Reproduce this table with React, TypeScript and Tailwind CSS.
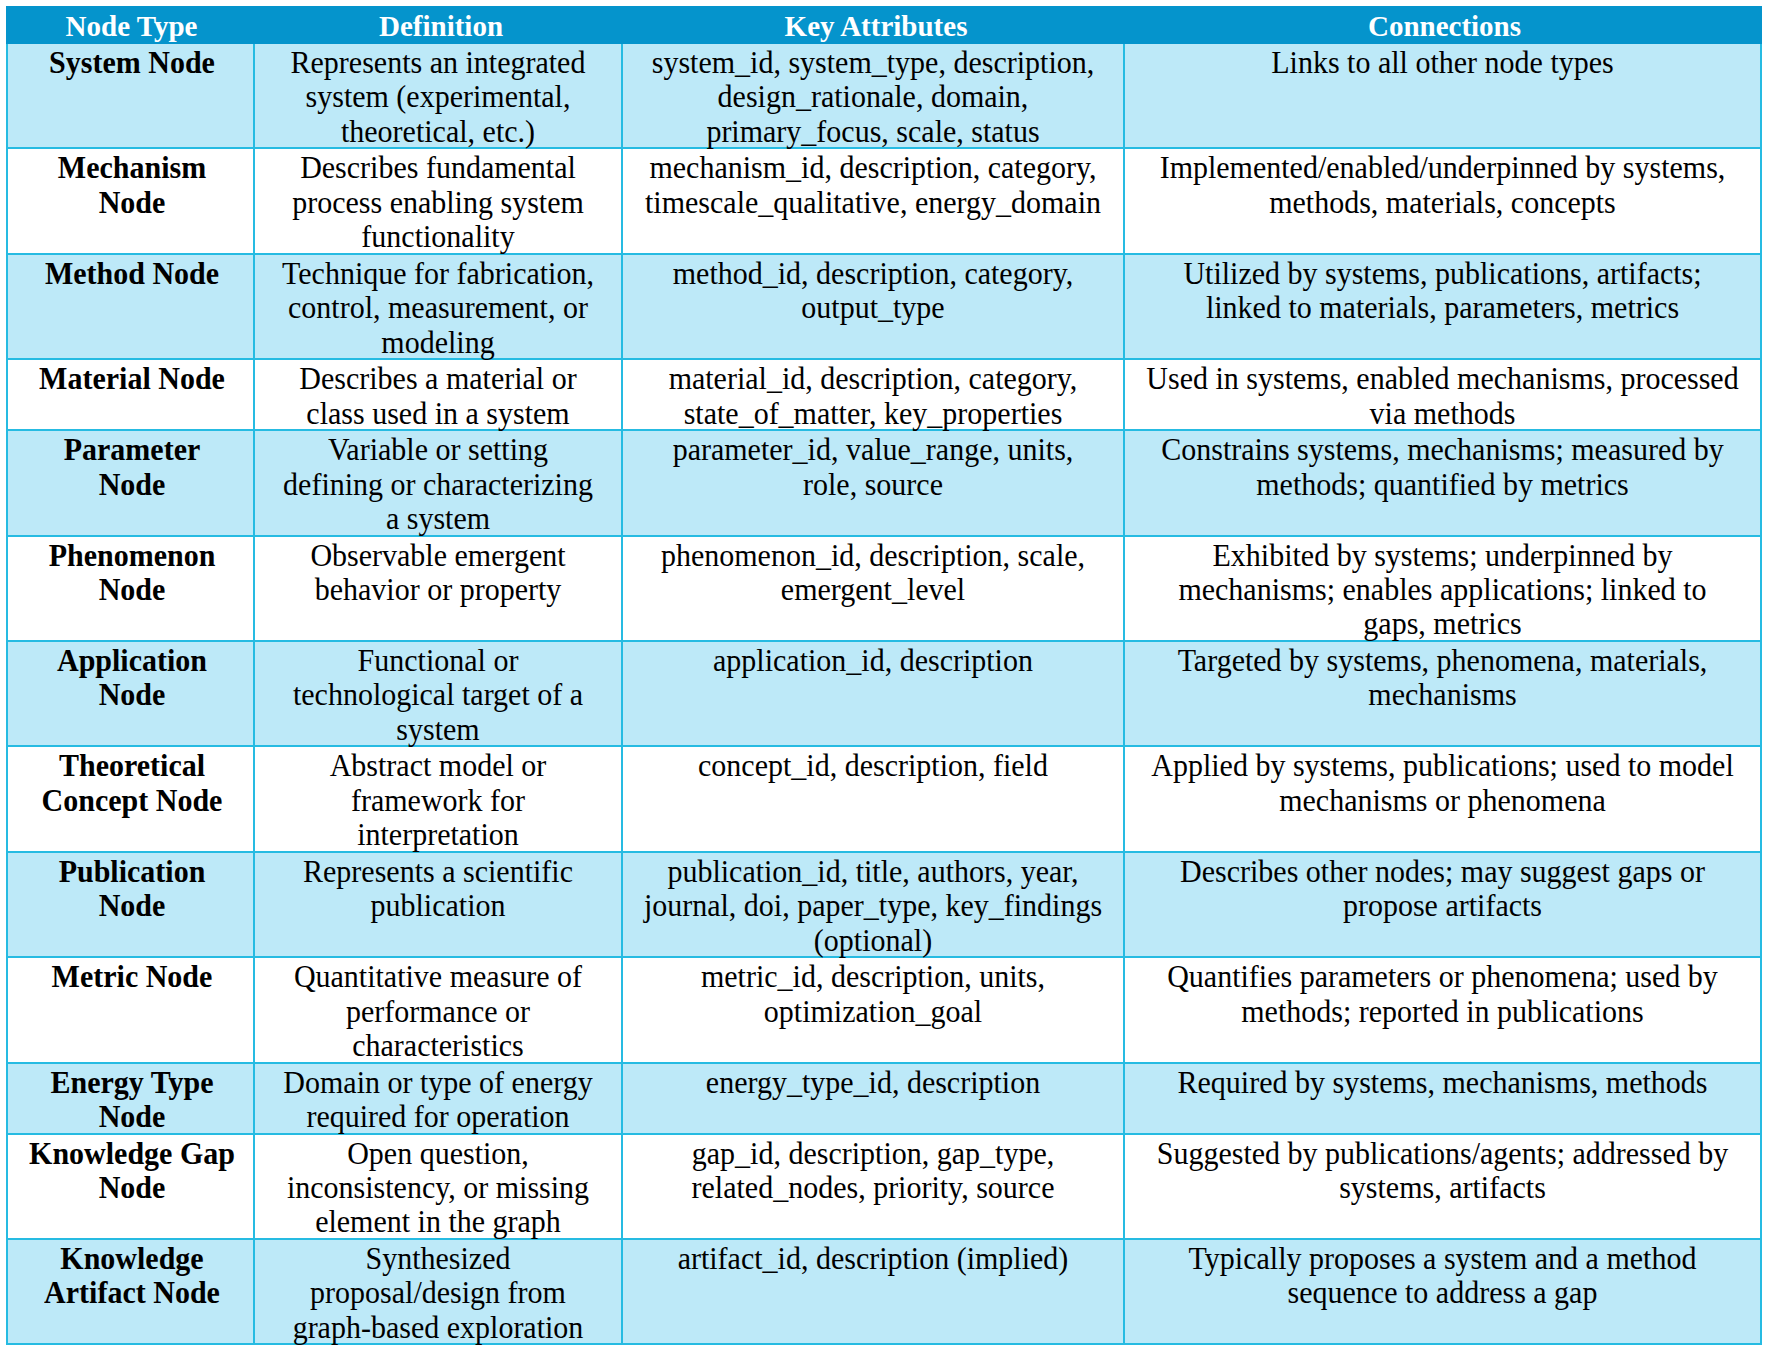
import React from "react";

type Row = {
  type: string[];
  definition: string[];
  attributes: string[];
  connections: string[];
  short?: boolean;
};

const rows: Row[] = [
  {
    type: ["System Node"],
    definition: ["Represents an integrated", "system (experimental,", "theoretical, etc.)"],
    attributes: ["system_id, system_type, description,", "design_rationale, domain,", "primary_focus, scale, status"],
    connections: ["Links to all other node types"],
  },
  {
    type: ["Mechanism", "Node"],
    definition: ["Describes fundamental", "process enabling system", "functionality"],
    attributes: ["mechanism_id, description, category,", "timescale_qualitative, energy_domain"],
    connections: ["Implemented/enabled/underpinned by systems,", "methods, materials, concepts"],
  },
  {
    type: ["Method Node"],
    definition: ["Technique for fabrication,", "control, measurement, or", "modeling"],
    attributes: ["method_id, description, category,", "output_type"],
    connections: ["Utilized by systems, publications, artifacts;", "linked to materials, parameters, metrics"],
  },
  {
    type: ["Material Node"],
    definition: ["Describes a material or", "class used in a system"],
    attributes: ["material_id, description, category,", "state_of_matter, key_properties"],
    connections: ["Used in systems, enabled mechanisms, processed", "via methods"],
    short: true,
  },
  {
    type: ["Parameter", "Node"],
    definition: ["Variable or setting", "defining or characterizing", "a system"],
    attributes: ["parameter_id, value_range, units,", "role, source"],
    connections: ["Constrains systems, mechanisms; measured by", "methods; quantified by metrics"],
  },
  {
    type: ["Phenomenon", "Node"],
    definition: ["Observable emergent", "behavior or property"],
    attributes: ["phenomenon_id, description, scale,", "emergent_level"],
    connections: ["Exhibited by systems; underpinned by", "mechanisms; enables applications; linked to", "gaps, metrics"],
  },
  {
    type: ["Application", "Node"],
    definition: ["Functional or", "technological target of a", "system"],
    attributes: ["application_id, description"],
    connections: ["Targeted by systems, phenomena, materials,", "mechanisms"],
  },
  {
    type: ["Theoretical", "Concept Node"],
    definition: ["Abstract model or", "framework for", "interpretation"],
    attributes: ["concept_id, description, field"],
    connections: ["Applied by systems, publications; used to model", "mechanisms or phenomena"],
  },
  {
    type: ["Publication", "Node"],
    definition: ["Represents a scientific", "publication"],
    attributes: ["publication_id, title, authors, year,", "journal, doi, paper_type, key_findings", "(optional)"],
    connections: ["Describes other nodes; may suggest gaps or", "propose artifacts"],
  },
  {
    type: ["Metric Node"],
    definition: ["Quantitative measure of", "performance or", "characteristics"],
    attributes: ["metric_id, description, units,", "optimization_goal"],
    connections: ["Quantifies parameters or phenomena; used by", "methods; reported in publications"],
  },
  {
    type: ["Energy Type", "Node"],
    definition: ["Domain or type of energy", "required for operation"],
    attributes: ["energy_type_id, description"],
    connections: ["Required by systems, mechanisms, methods"],
    short: true,
  },
  {
    type: ["Knowledge Gap", "Node"],
    definition: ["Open question,", "inconsistency, or missing", "element in the graph"],
    attributes: ["gap_id, description, gap_type,", "related_nodes, priority, source"],
    connections: ["Suggested by publications/agents; addressed by", "systems, artifacts"],
  },
  {
    type: ["Knowledge", "Artifact Node"],
    definition: ["Synthesized", "proposal/design from", "graph-based exploration"],
    attributes: ["artifact_id, description (implied)"],
    connections: ["Typically proposes a system and a method", "sequence to address a gap"],
  },
];

function Lines({ lines }: { lines: string[] }) {
  return (
    <>
      {lines.map((line, i) => (
        <div key={i} className="origin-top scale-y-[1.07] whitespace-nowrap">
          {line}
        </div>
      ))}
    </>
  );
}

export default function App() {
  return (
    <div
      className="min-h-[1356px] w-[1768px] bg-white pt-[6px] pl-[6px] text-black"
      style={{ fontFamily: '"Liberation Serif", "Times New Roman", serif' }}
    >
      <div className="w-[1756px]">
        {/* Header */}
        <div className="flex h-[38px] bg-[#0594cc] pt-[1px] text-[29px] font-bold leading-[38px] text-white">
          <div className="w-[251px] text-center">Node Type</div>
          <div className="w-[368px] text-center">Definition</div>
          <div className="w-[502px] text-center">Key Attributes</div>
          <div className="flex-1 text-center">Connections</div>
        </div>

        {/* Body */}
        {rows.map((row, i) => (
          <div
            key={i}
            className={`flex border-x-2 border-b-2 border-[#26bbe2] text-[30px] leading-[34.4px] ${
              row.short ? "h-[71px]" : "h-[105.4px]"
            } ${i % 2 === 0 ? "bg-[#bde9f8]" : "bg-white"}`}
          >
            <div className="w-[247px] shrink-0 border-r-2 border-[#26bbe2] pl-[3px] text-center font-bold">
              <Lines lines={row.type} />
            </div>
            <div className="w-[368px] shrink-0 border-r-2 border-[#26bbe2] text-center">
              <Lines lines={row.definition} />
            </div>
            <div className="w-[502px] shrink-0 border-r-2 border-[#26bbe2] text-center">
              <Lines lines={row.attributes} />
            </div>
            <div className="flex-1 text-center">
              <Lines lines={row.connections} />
            </div>
          </div>
        ))}
      </div>
    </div>
  );
}
